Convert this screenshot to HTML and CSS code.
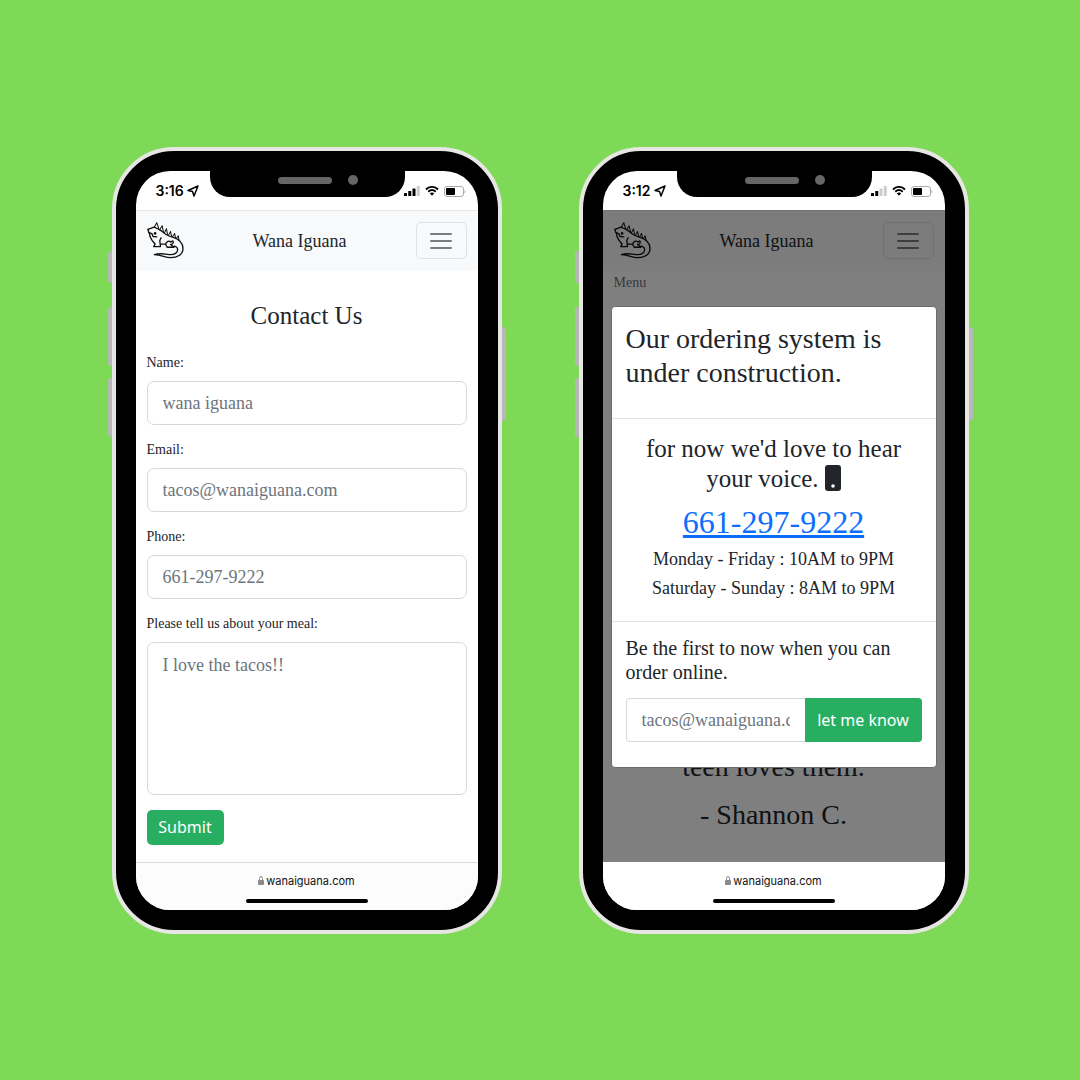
FILE: index.html
```html
<!DOCTYPE html>
<html lang="en">
<head>
<meta charset="utf-8">
<meta name="viewport" content="width=device-width, initial-scale=1">
<title>Wana Iguana</title>
<link rel="stylesheet" href="styles.css">
</head>
<body>
<svg class="sprite" aria-hidden="true">
  <symbol id="iguana" viewBox="0 0 110 110">
    <g fill="none" stroke="currentColor" stroke-width="4" stroke-linejoin="round" stroke-linecap="round">
      <path d="M3 22 L21 15 Q34 20 44 27 C52 36 60 40 76 45 C98 52 107 64 107 79 C107 96 92 106 70 106 C54 106 44 98 22 97 C42 91 52 96 66 97 C82 98 92 91 91 81 C90 72 82 71 77 73"/>
      <path d="M3 22 L5 31 C10 34 6 40 11 47 C14 56 20 60 24 66 L20 73 L40 73 L38 55 L42 47 M40 66 L55 66 C58 57 66 54 71 60 C78 52 80 60 76 65 L70 67 L80 75 L60 75 L55 66"/>
      <path d="M22 15 L29 2 L35 20 M38 23 L45 11 L49 30 M52 32 L58 20 L61 37 M64 39 L70 28 L73 43 M76 44 L82 34 L85 48 M87 49 L93 41 L95 53" stroke-width="3"/>
      <path d="M5 31 L15 35 L18 43 L29 44"/>
    </g>
    <circle cx="24" cy="34" r="4" fill="currentColor"/>
  </symbol>
  <symbol id="arrow" viewBox="0 0 24 24">
    <path d="M22 2 L2 11 L11 13 L14 22 Z" fill="none" stroke="currentColor" stroke-width="3" stroke-linejoin="round"/>
  </symbol>
  <symbol id="wifi" viewBox="0 0 28 20">
    <path d="M2 7 C9 0 19 0 26 7 M6.500 11.500 C11 7 17 7 21.500 11.500" fill="none" stroke="currentColor" stroke-width="3.600"/>
    <path d="M9.500 14.500 Q14 11 18.500 14.500 L14 19.500 Z" fill="currentColor"/>
  </symbol>
  <symbol id="battery" viewBox="0 0 44 22">
    <rect x="1" y="1" width="38" height="20" rx="5" fill="none" stroke="#aaa" stroke-width="2"/>
    <rect x="4" y="4" width="18" height="14" rx="2" fill="currentColor"/>
    <path d="M41 7 Q44 11 41 15 Z" fill="#999"/>
  </symbol>
  <symbol id="lock" viewBox="0 0 12 18">
    <rect x="0" y="8" width="12" height="10" rx="2" fill="#888"/>
    <path d="M3 9 V5 Q3 1 6 1 Q9 1 9 5 V9" fill="none" stroke="#888" stroke-width="2"/>
  </symbol>
  <symbol id="menu" viewBox="0 0 24 18">
    <path d="M2 2 H22 M2 9 H22 M2 16 H22" stroke="currentColor" stroke-width="2" stroke-linecap="round"/>
  </symbol>
</svg>

<main class="showcase">
  <section class="phone" aria-label="Contact page">
    <span class="key key-mute"></span><span class="key key-up"></span><span class="key key-down"></span><span class="key key-power"></span>
    <div class="notch"><span class="speaker"></span><span class="camera"></span></div>
    <div class="screen">
      <div class="status">
        <div class="clock">3:16 <svg class="icon-arrow"><use href="#arrow"/></svg></div>
        <div class="signals">
          <svg class="icon-bars" viewBox="0 0 32 20"><rect x="0" y="14" width="6" height="6" rx="1"/><rect x="8.500" y="10" width="6" height="10" rx="1"/><rect x="17" y="5" width="6" height="15" rx="1"/><rect class="weak" x="25.500" y="0" width="6" height="20" rx="1"/></svg>
          <svg class="icon-wifi"><use href="#wifi"/></svg>
          <svg class="icon-battery"><use href="#battery"/></svg>
        </div>
      </div>
      <div class="page">
        <header class="navbar">
          <svg class="logo" role="img" aria-label="Iguana"><use href="#iguana"/></svg>
          <span class="brand">Wana Iguana</span>
          <button class="toggler" type="button" aria-label="Open menu"><svg class="icon-menu"><use href="#menu"/></svg></button>
        </header>
        <form class="contact">
          <h1 class="contact-title">Contact Us</h1>
          <div class="field">
            <label for="name">Name:</label>
            <input class="control" id="name" type="text" placeholder="wana iguana">
          </div>
          <div class="field">
            <label for="email">Email:</label>
            <input class="control" id="email" type="email" placeholder="tacos@wanaiguana.com">
          </div>
          <div class="field">
            <label for="phone">Phone:</label>
            <input class="control" id="phone" type="tel" placeholder="661-297-9222">
          </div>
          <div class="field">
            <label for="meal">Please tell us about your meal:</label>
            <textarea class="control control-tall" id="meal" placeholder="I love the tacos!!"></textarea>
          </div>
          <button class="btn submit" type="submit">Submit</button>
        </form>
      </div>
      <footer class="urlbar">
        <span class="url"><svg class="icon-lock"><use href="#lock"/></svg>wanaiguana.com</span>
        <span class="home"></span>
      </footer>
    </div>
  </section>

  <section class="phone" aria-label="Ordering notice">
    <span class="key key-mute"></span><span class="key key-up"></span><span class="key key-down"></span><span class="key key-power"></span>
    <div class="notch"><span class="speaker"></span><span class="camera"></span></div>
    <div class="screen">
      <div class="status">
        <div class="clock">3:12 <svg class="icon-arrow"><use href="#arrow"/></svg></div>
        <div class="signals">
          <svg class="icon-bars" viewBox="0 0 32 20"><rect x="0" y="14" width="6" height="6" rx="1"/><rect x="8.500" y="10" width="6" height="10" rx="1"/><rect class="weak" x="17" y="5" width="6" height="15" rx="1"/><rect class="weak" x="25.500" y="0" width="6" height="20" rx="1"/></svg>
          <svg class="icon-wifi"><use href="#wifi"/></svg>
          <svg class="icon-battery"><use href="#battery"/></svg>
        </div>
      </div>
      <div class="page">
        <header class="navbar">
          <svg class="logo" role="img" aria-label="Iguana"><use href="#iguana"/></svg>
          <span class="brand">Wana Iguana</span>
          <button class="toggler" type="button" aria-label="Open menu"><svg class="icon-menu"><use href="#menu"/></svg></button>
        </header>
        <p class="crumb">Menu</p>
        <blockquote class="quote">
          <p>teen loves them.</p>
          <p>- Shannon C.</p>
        </blockquote>
        <div class="backdrop">
          <div class="modal" role="dialog" aria-labelledby="notice">
            <div class="modal-head"><h2 class="modal-title" id="notice">Our ordering system is under construction.</h2></div>
            <div class="modal-body">
              <h3 class="lead">for now we'd love to hear your voice. <svg class="icon-phone" viewBox="0 0 16 26"><rect width="16" height="26" rx="3" fill="currentColor"/><circle cx="8" cy="21" r="1.800" fill="#fff"/></svg></h3>
              <a class="tel" href="tel:6612979222">661-297-9222</a>
              <p class="hours">Monday - Friday : 10AM to 9PM</p>
              <p class="hours">Saturday - Sunday : 8AM to 9PM</p>
            </div>
            <form class="modal-foot">
              <label class="notify-label" for="notify">Be the first to now when you can order online.</label>
              <div class="group">
                <input class="control control-joined" id="notify" type="email" placeholder="tacos@wanaiguana.com">
                <button class="btn btn-joined" type="submit">let me know</button>
              </div>
            </form>
          </div>
        </div>
      </div>
      <footer class="urlbar urlbar-plain">
        <span class="url"><svg class="icon-lock"><use href="#lock"/></svg>wanaiguana.com</span>
        <span class="home"></span>
      </footer>
    </div>
  </section>
</main>
</body>
</html>
```
FILE: styles.css
```css
* { box-sizing: border-box; }

body {
  margin: 0;
  background: #7ed957;
  color: #212529;
  font-family: "Liberation Serif", serif;
}

h1, h2, h3, p, blockquote { margin: 0; font-weight: 400; }
button, input, textarea { font: inherit; }
svg { display: block; }
.sprite { position: absolute; width: 0; height: 0; }

.showcase {
  min-height: 100vh;
  padding: 40px 16px;
  display: flex;
  flex-wrap: wrap;
  justify-content: center;
  align-content: center;
  align-items: stretch;
  gap: 77px;
}

/* Device */
.phone {
  position: relative;
  display: flex;
  flex: 0 1 390px;
  padding: 20px;
  border: 4px solid #e6e6e3;
  border-radius: 62px;
  background: #000;
}

.screen {
  display: flex;
  flex-direction: column;
  flex: 1;
  min-width: 0;
  overflow: hidden;
  border-radius: 34px;
  background: #fff;
}

.key { position: absolute; left: -8px; width: 4px; background: #b7b7b7; border-radius: 3px 0 0 3px; }
.key-mute { top: 100px; height: 32px; }
.key-up { top: 156px; height: 59px; }
.key-down { top: 227px; height: 59px; }
.key-power { top: 176px; height: 94px; left: auto; right: -8px; border-radius: 0 3px 3px 0; }

.notch {
  position: absolute;
  top: 18px;
  left: 50%;
  width: 195px;
  height: 28px;
  margin-left: -97px;
  padding: 6px 0 0 68px;
  display: flex;
  gap: 16px;
  border-radius: 0 0 20px 20px;
  background: #000;
}
.speaker { width: 54px; height: 7px; border-radius: 4px; background: #666; margin-top: 2px; }
.camera { width: 10px; height: 10px; border-radius: 50%; background: #666; }

.status {
  display: flex;
  align-items: center;
  justify-content: space-between;
  height: 39px;
  padding: 2px 12px 0 20px;
  color: #000;
}
.clock { display: flex; align-items: center; gap: 3px; font: 600 14px/20px Inter, sans-serif; }
.signals { display: flex; align-items: center; gap: 5px; }
.icon-arrow { width: 12px; height: 12px; }
.icon-bars { width: 16px; height: 10px; }
.weak { fill: #ccc; }
.icon-wifi { width: 14px; height: 10px; }
.icon-battery { width: 22px; height: 11px; }

/* Site pages */
.page { position: relative; display: flex; flex-direction: column; flex: 1; }

.navbar {
  display: flex;
  align-items: center;
  justify-content: space-between;
  height: 61px;
  padding: 0 11px;
  border-top: 1px solid #e6e8e8;
  background: #f8f9fa;
}
.logo { width: 37px; height: 37px; color: #111; }
.brand { font-size: 18px; line-height: 24px; }
.toggler {
  display: flex;
  align-items: center;
  justify-content: center;
  width: 51px;
  height: 37px;
  padding: 0;
  border: 1px solid #dfe0e1;
  border-radius: 5px;
  background: none;
  color: #7b7c7d;
}
.icon-menu { width: 24px; height: 18px; }

.contact {
  display: flex;
  flex-direction: column;
  align-items: stretch;
  gap: 15px;
  padding: 29px 11px 17px;
}
.contact-title { margin-bottom: 6px; font-size: 25px; line-height: 32px; text-align: center; }
.field { display: flex; flex-direction: column; gap: 8px; font-size: 14px; line-height: 20px; }

.control {
  width: 100%;
  height: 44px;
  padding: 9px 15px 7px;
  border: 1px solid #d5dade;
  border-radius: 7px;
  background: #fff;
  color: #212529;
  font-size: 18px;
  line-height: 26px;
}
.control::placeholder { color: #6c757d; opacity: 1; }
.control-tall { height: 153px; resize: none; }

.btn {
  height: 35px;
  padding: 0 11px;
  border: 0;
  border-radius: 5px;
  background: #27ae60;
  color: #fff;
  font: 16px/24px "Noto Sans", sans-serif;
}
.submit { align-self: flex-start; min-width: 77px; }

.crumb { padding: 0 11px; color: #6c757d; font-size: 14px; line-height: 24px; }
.quote {
  display: flex;
  flex-direction: column;
  gap: 8px;
  margin-top: auto;
  padding-bottom: 27px;
  font-size: 28px;
  line-height: 40px;
  text-align: center;
}

/* Notice */
.backdrop {
  position: absolute;
  inset: 0;
  padding: 96px 8px 0;
  background: rgba(0, 0, 0, 0.5);
}
.modal {
  border: 1px solid #6c6c6c;
  border-radius: 4px;
  background: #fff;
}
.modal-head { padding: 15px 14px 28px; }
.modal-title { font-size: 28px; line-height: 34px; }
.modal-body {
  display: flex;
  flex-direction: column;
  align-items: center;
  padding: 15px 14px 18px;
  border: solid #e1e4e7;
  border-width: 1px 0;
  text-align: center;
}
.lead { padding: 0 14px; font-size: 25px; line-height: 30px; }
.icon-phone { display: inline-block; width: 16px; height: 26px; vertical-align: -4px; }
.tel { margin: 10px 0 5px; color: #0d6efd; font-size: 32px; line-height: 36px; }
.hours { font-size: 18px; line-height: 29px; }
.modal-foot { padding: 14px 14px 25px; }
.notify-label { display: block; margin-bottom: 14px; font-size: 20px; line-height: 24px; }
.group { display: flex; }
.control-joined { flex: 1; min-width: 0; border-right: 0; border-radius: 4px 0 0 4px; }
.btn-joined { width: 117px; height: 44px; border-radius: 0 4px 4px 0; white-space: nowrap; }

/* Browser bar */
.urlbar {
  display: flex;
  flex-direction: column;
  align-items: center;
  gap: 8px;
  height: 48px;
  padding-top: 8px;
  border-top: 1px solid #dcdcdc;
  background: #fcfcfd;
  color: #111;
}
.urlbar-plain { border-color: #fff; background: #fff; }
.url { display: flex; align-items: center; gap: 2px; font: 11px/20px Inter, sans-serif; }
.icon-lock { width: 6px; height: 9px; }
.home { width: 122px; height: 4px; border-radius: 2px; background: #000; }
```
